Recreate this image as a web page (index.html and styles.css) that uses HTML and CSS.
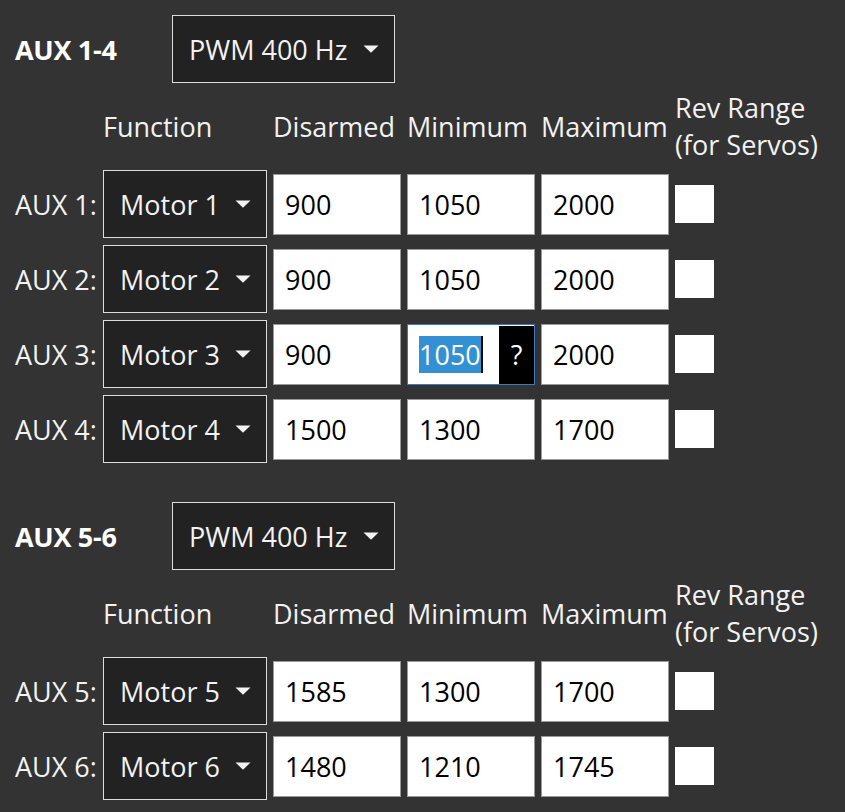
FILE: index.html
```html
<!DOCTYPE html>
<html>
<head>
<meta charset="utf-8">
<link rel="stylesheet" href="styles.css">
</head>
<body>
<div class="page">
  <section class="group">
    <div class="group-head">
      <h2 class="group-title">AUX 1-4</h2>
      <div class="select select-rate"><span>PWM 400 Hz</span><svg class="arrow" width="16" height="8" viewBox="0 0 16 8"><path d="M0.5 0.5 H15.5 L8 7.8 Z" fill="#f2f2f2"/></svg></div>
    </div>
    <div class="grid">
      <div></div>
      <div class="hdr">Function</div>
      <div class="hdr">Disarmed</div>
      <div class="hdr">Minimum</div>
      <div class="hdr">Maximum</div>
      <div class="hdr">Rev Range<br>(for Servos)</div>

      <div class="lbl">AUX 1:</div>
      <div class="select"><span>Motor 1</span><svg class="arrow" width="16" height="8" viewBox="0 0 16 8"><path d="M0.5 0.5 H15.5 L8 7.8 Z" fill="#f2f2f2"/></svg></div>
      <input class="num" type="text" value="900">
      <input class="num" type="text" value="1050">
      <input class="num" type="text" value="2000">
      <div class="check"></div>

      <div class="lbl">AUX 2:</div>
      <div class="select"><span>Motor 2</span><svg class="arrow" width="16" height="8" viewBox="0 0 16 8"><path d="M0.5 0.5 H15.5 L8 7.8 Z" fill="#f2f2f2"/></svg></div>
      <input class="num" type="text" value="900">
      <input class="num" type="text" value="1050">
      <input class="num" type="text" value="2000">
      <div class="check"></div>

      <div class="lbl">AUX 3:</div>
      <div class="select"><span>Motor 3</span><svg class="arrow" width="16" height="8" viewBox="0 0 16 8"><path d="M0.5 0.5 H15.5 L8 7.8 Z" fill="#f2f2f2"/></svg></div>
      <input class="num" type="text" value="900">
      <div class="num num-focus"><span class="sel">1050</span><span class="caret"></span><span class="help">?</span></div>
      <input class="num" type="text" value="2000">
      <div class="check"></div>

      <div class="lbl">AUX 4:</div>
      <div class="select"><span>Motor 4</span><svg class="arrow" width="16" height="8" viewBox="0 0 16 8"><path d="M0.5 0.5 H15.5 L8 7.8 Z" fill="#f2f2f2"/></svg></div>
      <input class="num" type="text" value="1500">
      <input class="num" type="text" value="1300">
      <input class="num" type="text" value="1700">
      <div class="check"></div>
    </div>
  </section>

  <section class="group">
    <div class="group-head">
      <h2 class="group-title">AUX 5-6</h2>
      <div class="select select-rate"><span>PWM 400 Hz</span><svg class="arrow" width="16" height="8" viewBox="0 0 16 8"><path d="M0.5 0.5 H15.5 L8 7.8 Z" fill="#f2f2f2"/></svg></div>
    </div>
    <div class="grid">
      <div></div>
      <div class="hdr">Function</div>
      <div class="hdr">Disarmed</div>
      <div class="hdr">Minimum</div>
      <div class="hdr">Maximum</div>
      <div class="hdr">Rev Range<br>(for Servos)</div>

      <div class="lbl">AUX 5:</div>
      <div class="select"><span>Motor 5</span><svg class="arrow" width="16" height="8" viewBox="0 0 16 8"><path d="M0.5 0.5 H15.5 L8 7.8 Z" fill="#f2f2f2"/></svg></div>
      <input class="num" type="text" value="1585">
      <input class="num" type="text" value="1300">
      <input class="num" type="text" value="1700">
      <div class="check"></div>

      <div class="lbl">AUX 6:</div>
      <div class="select"><span>Motor 6</span><svg class="arrow" width="16" height="8" viewBox="0 0 16 8"><path d="M0.5 0.5 H15.5 L8 7.8 Z" fill="#f2f2f2"/></svg></div>
      <input class="num" type="text" value="1480">
      <input class="num" type="text" value="1210">
      <input class="num" type="text" value="1745">
      <div class="check"></div>
    </div>
  </section>
</div>
</body>
</html>
```

FILE: styles.css
```css
html, body {
  margin: 0;
  padding: 0;
  background: #333333;
}
body {
  font-family: "Open Sans", "Liberation Sans", sans-serif;
  font-size: 27px;
  color: #f2f2f2;
}
.page {
  padding: 15px 0 0 15px;
}
.group {
  margin-bottom: 39px;
}
.group-head {
  display: flex;
  align-items: center;
  height: 68px;
  margin-bottom: 6px;
}
.group-title {
  margin: 0;
  width: 157px;
  font-size: 27px;
  font-weight: 700;
  letter-spacing: -0.3px;
  color: #ffffff;
}
.select {
  box-sizing: border-box;
  width: 164px;
  height: 68px;
  background: #222222;
  border: 1px solid #dcdcdc;
  display: flex;
  align-items: center;
  justify-content: space-between;
  padding: 0 15px 0 16px;
  color: #f2f2f2;
}
.select-rate {
  width: 223px;
}
.arrow {
  display: block;
  flex: none;
}
.grid {
  display: grid;
  grid-template-columns: 82px 164px 128px 128px 128px auto;
  column-gap: 6px;
  row-gap: 7px;
  align-items: center;
}
.hdr {
  line-height: 37px;
  white-space: nowrap;
}
.lbl {
  white-space: nowrap;
}
.num {
  box-sizing: border-box;
  width: 128px;
  height: 61px;
  margin: 0;
  border: 1px solid #999999;
  background: #ffffff;
  padding: 0 0 0 11px;
  font-family: "Open Sans", "Liberation Sans", sans-serif;
  font-size: 27px;
  color: #000000;
  outline: none;
}
.num-focus {
  position: relative;
  display: flex;
  align-items: center;
  border-color: #3a78c8;
}
.sel {
  background: #3390d3;
  color: #ffffff;
  line-height: 37px;
}
.caret {
  width: 2px;
  height: 37px;
  background: #000000;
}
.help {
  position: absolute;
  top: 1px;
  right: 0;
  bottom: 0;
  width: 35px;
  background: #000000;
  color: #ffffff;
  display: flex;
  align-items: center;
  justify-content: center;
}
.check {
  width: 39px;
  height: 38px;
  background: #ffffff;
}
```
